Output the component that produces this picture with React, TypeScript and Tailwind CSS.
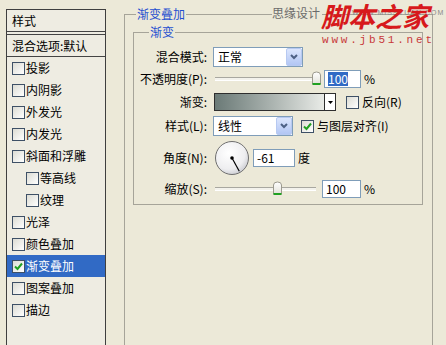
import React from 'react';

const styles = [
  { label: '投影', indent: false, checked: false },
  { label: '内阴影', indent: false, checked: false },
  { label: '外发光', indent: false, checked: false },
  { label: '内发光', indent: false, checked: false },
  { label: '斜面和浮雕', indent: false, checked: false },
  { label: '等高线', indent: true, checked: false },
  { label: '纹理', indent: true, checked: false },
  { label: '光泽', indent: false, checked: false },
  { label: '颜色叠加', indent: false, checked: false },
  { label: '渐变叠加', indent: false, checked: true, active: true },
  { label: '图案叠加', indent: false, checked: false },
  { label: '描边', indent: false, checked: false },
];

function Box({ checked }: { checked?: boolean }) {
  return (
    <span className="w-[13px] h-[13px] shrink-0 border border-[#3E5066] bg-gradient-to-br from-[#DCDCD4] to-white flex items-center justify-center">
      {checked && (
        <svg width="9" height="9" viewBox="0 0 9 9">
          <path d="M1 4.5 L3.5 7 L8 1.5" stroke="#21A121" strokeWidth="2" fill="none" />
        </svg>
      )}
    </span>
  );
}

function Select({ value, width }: { value: string; width: string }) {
  return (
    <div className={`${width} h-[20px] border border-[#7F9DB9] bg-white flex items-center`}>
      <span className="flex-1 pl-[4px]">{value}</span>
      <span className="w-[16px] h-[18px] rounded-[2px] border border-[#B7C9F1] bg-gradient-to-b from-[#DCE6FD] to-[#B2C6F4] flex items-center justify-center">
        <svg width="8" height="6" viewBox="0 0 8 6">
          <path d="M1 1 L4 4 L7 1" stroke="#4D6185" strokeWidth="2" fill="none" />
        </svg>
      </span>
    </div>
  );
}

function Slider({ pos }: { pos: number }) {
  return (
    <div className="relative w-[106px] h-[22px]">
      <div className="absolute left-[2px] right-[3px] top-[9px] h-[4px] border-t border-[#A8A79F] border-b border-b-white bg-[#F3F2EC]" />
      <svg className="absolute top-[3px]" style={{ left: pos }} width="11" height="15" viewBox="0 0 11 15">
        <defs>
          <linearGradient id="thumb" x1="0" y1="0" x2="0" y2="1">
            <stop offset="0" stopColor="#FFFFFF" />
            <stop offset="1" stopColor="#E3E2DA" />
          </linearGradient>
        </defs>
        <path d="M1.5 4 Q1.5 1 5.5 1 Q9.5 1 9.5 4 L9.5 13 L1.5 13 Z" fill="url(#thumb)" stroke="#9C9A8E" />
        <rect x="1.5" y="12" width="8" height="2" fill="#21A121" />
      </svg>
    </div>
  );
}

function Input({ value, width, selected }: { value: string; width: string; selected?: boolean }) {
  return (
    <div className={`${width} h-[18px] border border-[#7F9DB9] bg-white flex items-center pl-[3px]`}>
      <span className={selected ? 'bg-[#316AC5] text-white leading-[14px]' : 'leading-[14px]'}>{value}</span>
    </div>
  );
}

function Row({ label, h, mt, children }: { label: string; h: string; mt: string; children: React.ReactNode }) {
  return (
    <div className={`flex items-center ${h} ${mt}`}>
      <span className="w-[73px] text-right whitespace-nowrap">{label}</span>
      <div className="ml-[6px] flex items-center">{children}</div>
    </div>
  );
}

export default function App() {
  return (
    <div className="relative w-[446px] h-[345px] overflow-hidden bg-[#ECE9D8] flex text-[12px] text-black font-['Noto_Sans_CJK_SC','Liberation_Sans',sans-serif]">
      {/* style list */}
      <div className="ml-[6px] mt-[9px] w-[100px] h-[400px] shrink-0 border border-[#3F3F3F] bg-[#EEECE2]">
        <div className="h-[22px] border-b border-[#444] pl-[5px] flex items-center">样式</div>
        <div className="mt-[2px] h-[23px] border-t border-b border-[#444] pl-[5px] flex items-center">混合选项:默认</div>
        {styles.map((s) => (
          <div
            key={s.label}
            className={`h-[22px] flex items-center gap-[1px] ${s.indent ? 'pl-[19px]' : 'pl-[5px]'} ${s.active ? 'bg-[#316AC5] text-white' : ''}`}
          >
            <Box checked={s.checked} />
            <span>{s.label}</span>
          </div>
        ))}
      </div>

      {/* gradient overlay settings */}
      <fieldset className="mt-[6px] ml-[18px] w-[309px] h-[380px] shrink-0 border border-[#A6A499] pl-[8px] pt-[2px]">
        <legend className="ml-[3px] px-[1px] leading-[16px] text-[#1F4FD0]">渐变叠加</legend>
        <fieldset className="w-[290px] border border-[#A6A499] pt-[6px] pb-[4px]">
          <legend className="ml-[15px] px-[1px] leading-[16px] text-[#1F4FD0]">渐变</legend>

          <Row label="混合模式:" h="h-[22px]" mt="mt-0">
            <Select value="正常" width="w-[90px]" />
          </Row>

          <Row label="不透明度(P):" h="h-[22px]" mt="mt-0">
            <Slider pos={98} />
            <div className="ml-[5px]"><Input value="100" width="w-[37px]" selected /></div>
            <span className="ml-[3px]">%</span>
          </Row>

          <Row label="渐变:" h="h-[22px]" mt="mt-[1px]">
            <div className="ml-[1px] w-[122px] h-[18px] border border-[#2E2E2E] flex">
              <div className="flex-1 bg-gradient-to-r from-[#6B7A77] to-[#E9EBE7]" />
              <div className="w-[11px] border-l border-[#2E2E2E] bg-white flex items-center justify-center">
                <svg width="5" height="3" viewBox="0 0 5 3">
                  <path d="M0 0 L5 0 L2.5 3 Z" fill="#000" />
                </svg>
              </div>
            </div>
            <span className="ml-[10px]"><Box /></span>
            <span className="ml-[3px]">反向(R)</span>
          </Row>

          <Row label="样式(L):" h="h-[22px]" mt="mt-[2px]">
            <Select value="线性" width="w-[80px]" />
            <span className="ml-[8px]"><Box checked /></span>
            <span className="ml-[3px]">与图层对齐(I)</span>
          </Row>

          <Row label="角度(N):" h="h-[36px]" mt="mt-[3px]">
            <svg width="36" height="36" viewBox="0 0 36 36" className="ml-[1px]">
              <defs>
                <radialGradient id="dial" cx="0.4" cy="0.35" r="0.7">
                  <stop offset="0" stopColor="#FFFFFF" />
                  <stop offset="0.7" stopColor="#EEEEF0" />
                  <stop offset="1" stopColor="#C9CAD0" />
                </radialGradient>
              </defs>
              <circle cx="18" cy="18" r="16.5" fill="url(#dial)" stroke="#6F6F6F" />
              <line x1="18" y1="18" x2="25.3" y2="31.2" stroke="#000" strokeWidth="1.2" />
              <circle cx="18" cy="18" r="1.8" fill="#000" />
            </svg>
            <div className="ml-[3px]"><Input value="-61" width="w-[42px]" /></div>
            <span className="ml-[3px]">度</span>
          </Row>

          <Row label="缩放(S):" h="h-[22px]" mt="mt-[2px]">
            <Slider pos={59} />
            <div className="ml-[3px]"><Input value="100" width="w-[39px]" /></div>
            <span className="ml-[3px]">%</span>
          </Row>
        </fieldset>
      </fieldset>

      {/* watermark */}
      <div className="absolute left-[272px] top-[5px] leading-[16px] text-[#6B6B6B] bg-[#ECE9D8] pr-[2px]">思缘设计</div>
      <div className="absolute left-[352px] top-[9px] text-[7px] leading-[8px] text-[#8A8A8A] tracking-[1px] font-['Liberation_Sans',sans-serif]">WWW.MISSYUAN.COM</div>
      <div className="absolute left-[321px] top-[1px] text-[27px] leading-[30px] font-bold italic text-[#D7191C]">脚本之家</div>
      <div className="absolute left-[322px] top-[34px] text-[11px] leading-[12px] tracking-[2.8px] text-[#C8383A] font-['Liberation_Mono',monospace]">www.jb51.net</div>
    </div>
  );
}
